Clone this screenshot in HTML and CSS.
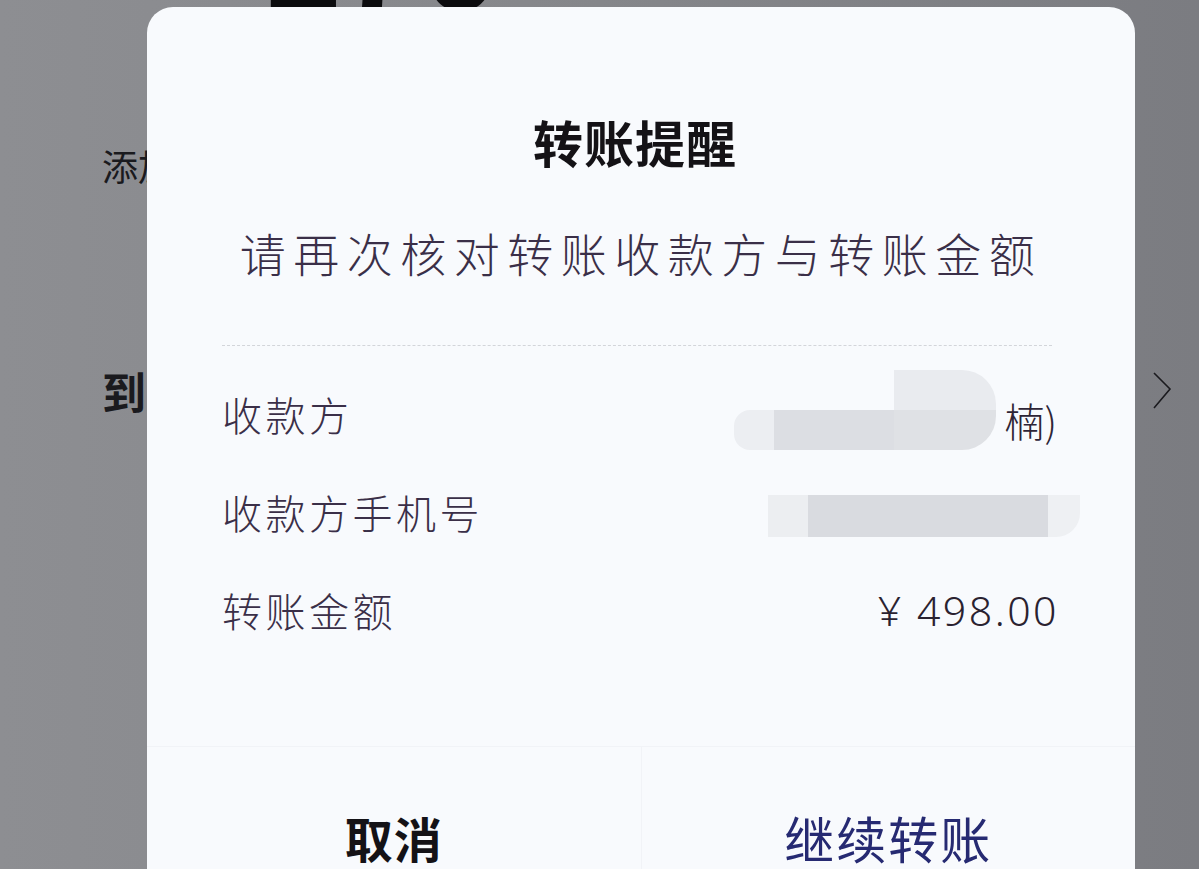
FILE: index.html
```html
<!DOCTYPE html>
<html lang="zh-CN">
<head>
<meta charset="utf-8">
<title>转账提醒</title>
<link rel="stylesheet" href="styles.css">
</head>
<body>
<div class="page">
  <div class="top-amount"><span>170</span></div>
  <div class="bg-row bg-add">添加</div>
  <div class="bg-row bg-to">
    <span class="bg-to-text">到账时间</span>
    <svg class="chev" width="22" height="40" viewBox="0 0 22 40"><path d="M3 2 L19 18 L3 37" fill="none" stroke="#1b1b1f" stroke-width="1.6"/></svg>
  </div>

  <div class="modal">
    <h1 class="title">转账提醒</h1>
    <p class="subtitle">请再次核对转账收款方与转账金额</p>
    <div class="divider"></div>
    <div class="rows">
      <div class="row">
        <span class="label">收款方</span>
        <span class="value">
          <span class="blur1">
            <span class="blur1-top"></span>
            <span class="blur1-bottom"><i class="s a"></i><i class="s b"></i><i class="s c"></i></span>
          </span>
          <span class="name">楠)</span>
        </span>
      </div>
      <div class="row">
        <span class="label">收款方手机号</span>
        <span class="value">
          <span class="blur2"><i class="s d"></i><i class="s e"></i><i class="s f"></i></span>
        </span>
      </div>
      <div class="row">
        <span class="label">转账金额</span>
        <span class="value amount">¥ 498.00</span>
      </div>
    </div>
    <div class="footer">
      <button class="btn cancel">取消</button>
      <button class="btn confirm">继续转账</button>
    </div>
  </div>
</div>
</body>
</html>
```

FILE: styles.css
```css
html, body {
  margin: 0;
  padding: 0;
  height: 100%;
}
body {
  width: 1199px;
  height: 869px;
  overflow: hidden;
  background: linear-gradient(90deg, #8d8e92 0%, #85868a 50%, #7b7c81 100%);
  font-family: "Noto Sans CJK SC", "Noto Sans", sans-serif;
}
.page {
  position: relative;
  width: 1199px;
  height: 869px;
}
.top-amount {
  height: 8px;
  overflow: hidden;
  padding-left: 262px;
}
.top-amount span {
  display: block;
  margin-top: -88px;
  font-family: "Liberation Sans", sans-serif;
  font-size: 140px;
  line-height: 100px;
  font-weight: 700;
  color: #0c0c0e;
  letter-spacing: 2px;
}
.bg-row {
  padding-left: 102px;
  color: #1a1a1e;
}
.bg-add {
  margin-top: 132px;
  font-size: 36px;
  line-height: 50px;
  font-weight: 400;
}
.bg-to {
  margin-top: 166px;
  display: flex;
  align-items: center;
  justify-content: space-between;
  padding-right: 26px;
  height: 70px;
}
.bg-to-text {
  font-size: 44px;
  font-weight: 700;
}
.chev {
  display: block;
}
.modal {
  position: absolute;
  left: 147px;
  top: 7px;
  width: 988px;
  height: 960px;
  background: #f8fafd;
  border-radius: 26px;
  box-sizing: border-box;
  padding-top: 104px;
  display: flex;
  flex-direction: column;
}
.title {
  margin: 0;
  padding-right: 12px;
  text-align: center;
  font-size: 50px;
  line-height: 60px;
  font-weight: 700;
  color: #141216;
  letter-spacing: 1px;
}
.subtitle {
  margin: 51px 0 0;
  text-align: center;
  font-size: 46px;
  line-height: 60px;
  font-weight: 300;
  color: #3a2f48;
  letter-spacing: 7.5px;
  padding-left: 0;
}
.divider {
  margin: 63px 83px 0 75px;
  border-top: 1.5px dashed #d3d5da;
}
.rows {
  margin: 19px 78px 0 75px;
  display: flex;
  flex-direction: column;
}
.row {
  height: 98px;
  display: flex;
  align-items: center;
  justify-content: space-between;
}
.label {
  font-size: 40px;
  font-weight: 300;
  color: #3a2f48;
  letter-spacing: 3.5px;
}
.value {
  display: flex;
  align-items: center;
  color: #2e2536;
}
.name {
  font-size: 40px;
  font-weight: 300;
  margin-top: 12px;
  margin-left: 8px;
}
.blur1 {
  display: flex;
  flex-direction: column;
  align-items: flex-end;
  margin-top: -8px;
}
.blur1-top {
  width: 102px;
  height: 40px;
  background: #e9ebef;
  border-radius: 0 34px 0 0;
}
.blur1-bottom {
  display: flex;
  height: 40px;
}
.s {
  display: block;
  height: 100%;
}
.s.a { width: 40px; background: #eceef2; border-radius: 16px 0 0 16px; }
.s.b { width: 120px; background: #dcdee3; }
.s.c { width: 102px; background: #dfe1e5; border-radius: 0 0 34px 0; }
.blur2 {
  display: flex;
  height: 42px;
  margin-right: -23px;
  margin-top: 8px;
}
.s.d { width: 40px; background: #eceef1; }
.s.e { width: 240px; background: #d9dbe0; }
.s.f { width: 32px; background: #eef0f3; border-radius: 0 0 24px 0; }
.amount {
  font-family: "Noto Sans", "Liberation Sans", sans-serif;
  font-size: 41px;
  font-weight: 300;
  letter-spacing: 2.5px;
  color: #2a2230;
  margin-right: -2px;
}
.footer {
  margin-top: 87px;
  display: flex;
  border-top: 1px solid #f1f3f7;
}
.btn {
  flex: 1;
  height: 180px;
  border: none;
  background: transparent;
  font-family: "Noto Sans CJK SC", "Noto Sans", sans-serif;
  font-size: 48px;
  padding: 0;
  letter-spacing: 1px;
}
.cancel {
  font-weight: 700;
  color: #141216;
  border-right: 1px solid #f1f3f7;
}
.confirm {
  font-weight: 400;
  font-size: 50px;
  letter-spacing: 2px;
  color: #262a72;
}
```
